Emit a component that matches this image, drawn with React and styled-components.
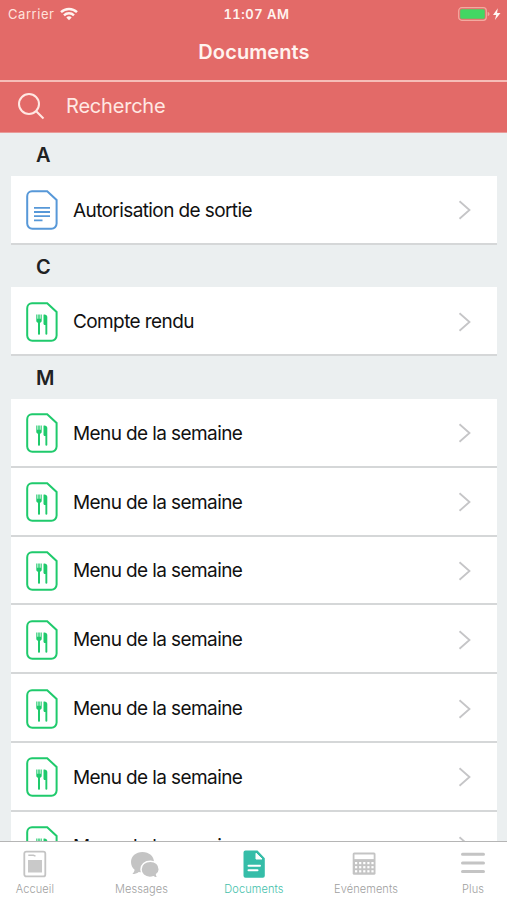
import styled, { createGlobalStyle } from "styled-components"

const GlobalStyle = createGlobalStyle`
    * { box-sizing: border-box; }
    body {
        margin:0;
        overflow:hidden;
        font-family: Inter, "Liberation Sans", sans-serif;
    }
    svg { display:block; flex-shrink:0; }
`
const Screen = styled.div`
    width:507px;
    height:900px;
    display:flex;
    flex-direction:column;
    background-color:#ebeff0;
    overflow:hidden;
`
const Header = styled.header`
    height:80px;
    flex-shrink:0;
    background-color:#e36a68;
    color:#fff3ef;
`
const StatusBar = styled.div`
    height:28px;
    display:grid;
    grid-template-columns:1fr auto 1fr;
    align-items:center;
    padding:0 6px 0 8px;
    font-size:13px;
    line-height:28px;
`
const Carrier = styled.div`
    display:flex;
    align-items:center;
    gap:6px;
    letter-spacing:0.55px;
    color:#ffe3dd;
`
const Clock = styled.div`
    font-weight:600;
    font-variant-numeric:tabular-nums;
    letter-spacing:0.5px;
    padding-left:4px;
`
const Power = styled.div`
    display:flex;
    justify-content:flex-end;
`
const Title = styled.h1`
    margin:0;
    height:48px;
    line-height:49px;
    padding-left:1px;
    text-align:center;
    font-size:20px;
    font-weight:600;
    letter-spacing:0.1px;
`
const SearchBar = styled.div`
    height:53px;
    flex-shrink:0;
    display:flex;
    align-items:center;
    gap:20px;
    padding:0 0 2px 17px;
    border-top:2px solid #f6bdb8;
    border-bottom:1px solid #e99b99;
    background-color:#e36a68;
    color:#ffe8e3;
    font-size:20px;
    letter-spacing:-0.2px;
`
const List = styled.main`
    flex:1;
    min-height:0;
    overflow:hidden;
    padding:0 10px 0 11px;
`
const Letter = styled.h2`
    margin:0;
    height:42.8px;
    line-height:44px;
    padding-left:25px;
    font-size:20px;
    font-weight:600;
    color:#1f2223;
`
const Row = styled.div`
    height:68.8px;
    display:flex;
    align-items:center;
    padding:2px 26px 0 15px;
    background-color:#fff;
    border-bottom:2px solid #d5d7d8;
`
const Name = styled.span`
    flex:1;
    padding-left:15px;
    font-size:19px;
    letter-spacing:-0.6px;
    color:#111;
`
const TabBar = styled.nav`
    height:59px;
    flex-shrink:0;
    display:flex;
    justify-content:space-between;
    padding:0 1px 0 2px;
    border-top:1px solid #b5b5b5;
    background-color:#fff;
`
const Tab = styled.div`
    width:66px;
    display:flex;
    flex-direction:column;
    align-items:center;
    padding-top:8px;
`
const TabLabel = styled.span`
    margin-top:4px;
    margin-left:${props => props.$shift || 0}px;
    font-size:11px;
    line-height:14px;
    font-weight:300;
    white-space:nowrap;
    letter-spacing:0.1px;
    color:${props => props.$active ? "#45bfab" : "#a0a0a0"};
`

const WifiIcon = () => (
    <svg width="18" height="14" viewBox="0 0 18 14" fill="none" stroke="#fff3ef" strokeWidth="2.4">
        <path d="M1 5.2C5.4.9 12.6.9 17 5.2" />
        <path d="M4 8.3c2.8-2.7 7.2-2.7 10 0" />
        <path d="M6.3 10.4c1.5-1.4 3.9-1.4 5.4 0L9 13.2z" fill="#fff3ef" stroke="none" />
    </svg>
)

const BatteryIcon = () => (
    <svg width="43" height="14" viewBox="0 0 43 14">
        <rect x=".7" y=".7" width="27.6" height="12.6" rx="3" fill="none" stroke="#f3aaa0" strokeWidth="1.2" />
        <rect x="2.2" y="2.2" width="24.6" height="9.6" rx="1.5" fill="#43d763" />
        <path d="M29.7 5v4.2c1.3-.4 1.8-1.1 1.8-2.1s-.5-1.7-1.8-2.1" fill="#f3aaa0" />
        <path d="M39.8 1.3 35 8h3.2l-1.3 5 5.6-7h-3.4z" fill="#fff8f4" />
    </svg>
)

const SearchIcon = () => (
    <svg width="29" height="29" viewBox="0 0 29 29" fill="none" stroke="#ffe8e3" strokeWidth="2">
        <circle cx="12" cy="12" r="10" />
        <path d="m19.200 19.200 7.300 7.300" />
    </svg>
)

const PageIcon = ({ type }) => {
    const color = type === "text" ? "#5798d8" : "#1fca6c"
    return (
        <svg width="32" height="40" viewBox="0 0 32 40" fill="none" stroke={color} strokeWidth="2">
            <path d="M6 1.2h15.2L30.6 10v23.5a5.2 5.2 0 0 1-5.2 5.2H6.4a5.2 5.2 0 0 1-5.2-5.2V6.2a5 5 0 0 1 4.8-5z" />
            {type === "text" ? (
                <path d="M8 17.8h16M8 22h16M8 26.2h16M8 30.3h8.5" strokeWidth="1.8" />
            ) : (
                <g fill={color} stroke="none">
                    <path d="M10.3 12.500h1.100v4.300h.9v-4.300h1.400v4.300h.9v-4.300h1.100v6.300c0 1-.7 1.700-1.700 2v11.300c0 .9-2 .9-2 0V20.800c-1-.3-1.700-1-1.700-2z" />
                    <path d="M17.500 12.700c1.900-.5 3.800.5 3.800 2.300v17.100c0 1-1.900 1-1.900 0V23h-1.200l-.7-1.100z" />
                </g>
            )}
        </svg>
    )
}

const Chevron = () => (
    <svg width="13" height="20" viewBox="0 0 13 20" fill="none" stroke="#c5c5c7" strokeWidth="1.8">
        <path d="m1.5 1.2 10 8.8-10 8.8" />
    </svg>
)

const HomeIcon = () => (
    <svg width="24" height="28" viewBox="0 0 24 28">
        <rect x="1.3" y="1.6" width="21" height="24.800" rx="2" fill="none" stroke="#c4c4c4" strokeWidth="1.800" />
        <path d="M5.3 5.300h5.200l2 .9" fill="none" stroke="#c4c4c4" strokeWidth="1.4" />
        <rect x="5" y="10" width="14" height="12.500" fill="#c9c9c9" />
    </svg>
)

const ChatIcon = () => (
    <svg width="30" height="28" viewBox="0 0 30 28" fill="#c4c4c4">
        <path d="M12.5 2C5.9 2 1 6.3 1 12c0 3.3 1.4 6 3.6 7.8-.2 1.6-1 3-2.2 4.2 2.5 0 4.6-.7 6.3-2.1 1.2.3 2.4.4 3.8.4C19 22.3 24 17.8 24 12S19 2 12.5 2z" />
        <path d="M20.5 11.200c-5.600 0-9.500 3.400-9.500 8.200 0 4.700 3.700 8 8.900 8 1.300 0 2.500-.2 3.600-.6 1.400.9 2.900 1.200 4.600 1-.9-1-1.400-2.100-1.500-3.400 1.800-1.300 2.700-2.900 2.700-4.900 0-4.800-3.600-8.300-8.800-8.300z" stroke="#fff" strokeWidth="1.5" />
    </svg>
)

const DocumentsIcon = () => (
    <svg width="24" height="28" viewBox="0 0 24 28">
        <path d="M3.5.5h12L22.8 8.300v17.500a2 2 0 0 1-2 2H3.500a2 2 0 0 1-2-2V2.500a2 2 0 0 1 2-2z" fill="#35bda8" />
        <path d="M6.500 15.700h11.500M6.500 20.200h9" fill="none" stroke="#fff" strokeWidth="2" strokeLinecap="round" />
        <path d="M14 3.200v5.800h6z" fill="#fff" stroke="#fff" strokeLinejoin="round" />
    </svg>
)

const CalendarIcon = () => {
    const cells = []
    for (let y = 0; y < 3; y++) {
        for (let x = 0; x < 5; x++) {
            cells.push(<rect key={`${x}-${y}`} x={3 + x * 4.1} y={12 + y * 4.1} width="2.2" height="2.2" fill="#fff" />)
        }
    }
    return (
        <svg width="24" height="28" viewBox="0 0 24 28">
            <rect x=".7" y="2.500" width="22.8" height="22.3" rx="1.5" fill="#c4c4c4" />
            <rect x="2.5" y="4.500" width="19.2" height="4.6" fill="#fff" />
            {cells}
        </svg>
    )
}

const MenuIcon = () => (
    <svg width="24" height="28" viewBox="0 0 24 28" stroke="#c4c4c4" strokeWidth="3" strokeLinecap="round">
        <path d="M1.5 4.200h21M1.5 12.900h21M1.5 21.600h21" />
    </svg>
)

const sections = [
    { letter: "A", items: [{ name: "Autorisation de sortie", type: "text" }] },
    { letter: "C", items: [{ name: "Compte rendu", type: "menu" }] },
    { letter: "M", items: Array(7).fill({ name: "Menu de la semaine", type: "menu" }) },
]

const tabs = [
    { label: "Accueil", icon: <HomeIcon /> },
    { label: "Messages", icon: <ChatIcon />, shift: -6 },
    { label: "Documents", icon: <DocumentsIcon />, active: true },
    { label: "Evénements", icon: <CalendarIcon />, shift: 5 },
    { label: "Plus", icon: <MenuIcon /> },
]

export default function App() {
    return (
        <Screen>
            <GlobalStyle />
            <Header>
                <StatusBar>
                    <Carrier>Carrier <WifiIcon /></Carrier>
                    <Clock>11:07 AM</Clock>
                    <Power><BatteryIcon /></Power>
                </StatusBar>
                <Title>Documents</Title>
            </Header>
            <SearchBar>
                <SearchIcon />
                <span>Recherche</span>
            </SearchBar>
            <List>
                {sections.map(section => (
                    <section key={section.letter}>
                        <Letter>{section.letter}</Letter>
                        {section.items.map((item, index) => (
                            <Row key={index}>
                                <PageIcon type={item.type} />
                                <Name>{item.name}</Name>
                                <Chevron />
                            </Row>
                        ))}
                    </section>
                ))}
            </List>
            <TabBar>
                {tabs.map(tab => (
                    <Tab key={tab.label}>
                        {tab.icon}
                        <TabLabel $active={tab.active} $shift={tab.shift}>{tab.label}</TabLabel>
                    </Tab>
                ))}
            </TabBar>
        </Screen>
    )
}
